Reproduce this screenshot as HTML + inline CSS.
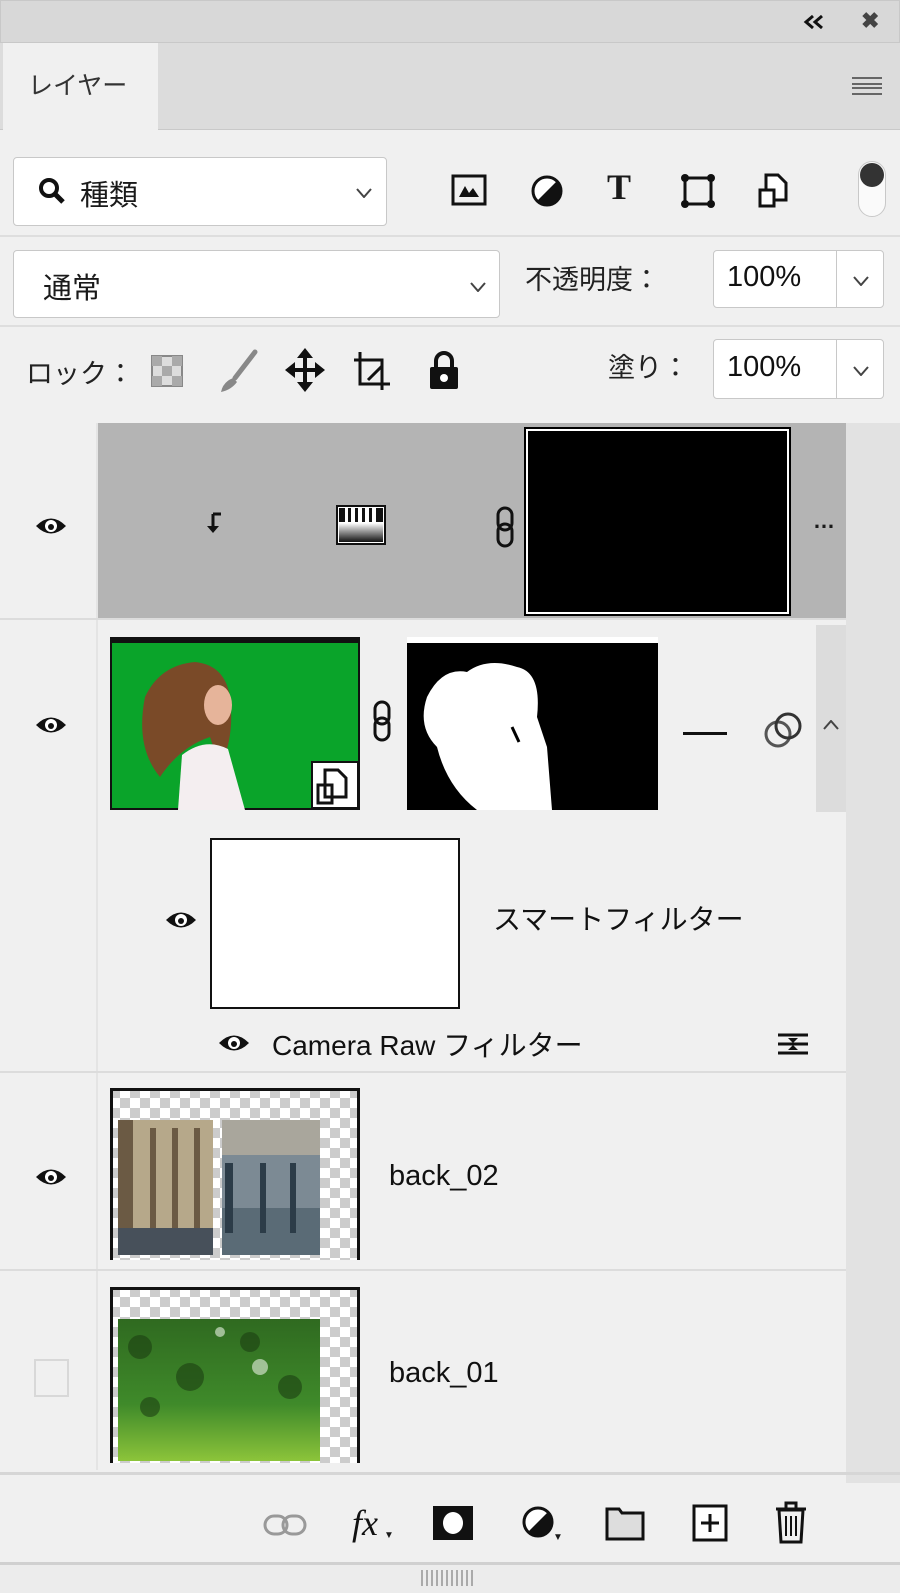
<!DOCTYPE html>
<html><head><meta charset="utf-8"><style>
*{margin:0;padding:0;box-sizing:border-box}
body{width:900px;height:1593px;background:#f0f0f0;position:relative;overflow:hidden;font-family:"Liberation Sans","Noto Sans CJK JP",sans-serif;color:#1a1a1a}
.a{position:absolute}
.box{position:absolute;background:#fff;border:1px solid #c8c8c8;border-radius:4px}
.t{position:absolute;white-space:nowrap}
.eye{position:absolute;width:34px;height:22px}
.chev{position:absolute;width:16px;height:10px}
</style></head><body>
<!-- top bar -->
<div class="a" style="left:0;top:0;width:900px;height:43px;background:#d8d8d8;border:1px solid #c8c8c8"></div>
<svg class="a" style="left:803px;top:14px" width="22" height="16"><path d="M10 2 L3 8 L10 14 M19 2 L12 8 L19 14" fill="none" stroke="#111" stroke-width="3"/></svg>
<div class="t" style="left:861px;top:8px;font-size:22px;font-weight:bold;color:#444">✖</div>
<!-- tab row -->
<div class="a" style="left:0;top:43px;width:900px;height:87px;background:#dcdcdc;border-bottom:1px solid #c9c9c9"></div>
<div class="a" style="left:3px;top:43px;width:155px;height:88px;background:#f0f0f0"></div>
<div class="t" style="left:28px;top:66px;font-size:25px;color:#333">レイヤー</div>
<div class="a" style="left:852px;top:77px;width:30px;height:18px;border-top:2px solid #666;border-bottom:2px solid #666"></div>
<div class="a" style="left:852px;top:83px;width:30px;height:6px;border-top:2px solid #666;border-bottom:2px solid #666"></div>
<!-- filter row -->
<div class="box" style="left:13px;top:157px;width:374px;height:69px"></div>
<svg class="a" style="left:38px;top:177px" width="28" height="28"><circle cx="11" cy="11" r="8" fill="none" stroke="#111" stroke-width="4"/><line x1="17" y1="17" x2="25" y2="25" stroke="#111" stroke-width="5"/></svg>
<div class="t" style="left:80px;top:172px;font-size:29px">種類</div>
<svg class="chev" style="left:356px;top:188px"><path d="M1 1 L8 9 L15 1" fill="none" stroke="#444" stroke-width="2"/></svg>
<svg class="a" style="left:451px;top:173px" width="36" height="34"><rect x="2" y="3" width="32" height="28" fill="none" stroke="#111" stroke-width="3"/><path d="M8 24 L14 13 L18 20 L22 15 L28 24Z" fill="#111"/></svg>
<svg class="a" style="left:531px;top:174px" width="32" height="34"><circle cx="16" cy="17" r="14" fill="#fff" stroke="#111" stroke-width="3"/><path d="M26 7 A14 14 0 0 1 6 27 Z" fill="#111"/></svg>
<div class="t" style="left:607px;top:166px;font-size:36px;font-weight:bold;font-family:'Liberation Serif',serif">T</div>
<svg class="a" style="left:680px;top:173px" width="36" height="36"><rect x="5" y="5" width="26" height="26" fill="none" stroke="#111" stroke-width="3"/><g fill="#111"><circle cx="5" cy="5" r="4"/><circle cx="31" cy="5" r="4"/><circle cx="5" cy="31" r="4"/><circle cx="31" cy="31" r="4"/></g></svg>
<svg class="a" style="left:757px;top:172px" width="32" height="38"><path d="M9 3 H21 L29 11 V28 H9Z" fill="#fff" stroke="#111" stroke-width="3"/><rect x="3" y="18" width="14" height="16" fill="#fff" stroke="#111" stroke-width="3"/></svg>
<div class="a" style="left:858px;top:161px;width:28px;height:56px;border:1px solid #c8c8c8;border-radius:14px;background:#fafafa"></div>
<div class="a" style="left:860px;top:163px;width:24px;height:24px;border-radius:12px;background:#333"></div>
<div class="a" style="left:0;top:235px;width:900px;height:2px;background:#dedede"></div>
<!-- blend row -->
<div class="box" style="left:13px;top:250px;width:487px;height:68px"></div>
<div class="t" style="left:43px;top:265px;font-size:29px">通常</div>
<svg class="chev" style="left:470px;top:282px"><path d="M1 1 L8 9 L15 1" fill="none" stroke="#444" stroke-width="2"/></svg>
<div class="t" style="left:525px;top:258px;font-size:27px;color:#222">不透明度：</div>
<div class="box" style="left:713px;top:250px;width:171px;height:58px"></div>
<div class="a" style="left:836px;top:251px;width:1px;height:56px;background:#c8c8c8"></div>
<div class="t" style="left:727px;top:261px;font-size:29px;color:#111">100%</div>
<svg class="chev" style="left:853px;top:276px"><path d="M1 1 L8 9 L15 1" fill="none" stroke="#444" stroke-width="2"/></svg>
<div class="a" style="left:0;top:325px;width:900px;height:2px;background:#dedede"></div>
<!-- lock row -->
<div class="t" style="left:26px;top:352px;font-size:27px;color:#222">ロック：</div>
<svg class="a" style="left:150px;top:354px" width="34" height="34"><rect x="2" y="2" width="30" height="30" fill="#ddd" stroke="#888" stroke-width="2"/><g fill="#aaa"><rect x="2" y="2" width="10" height="10"/><rect x="22" y="2" width="10" height="10"/><rect x="12" y="12" width="10" height="10"/><rect x="2" y="22" width="10" height="10"/><rect x="22" y="22" width="10" height="10"/></g></svg>
<svg class="a" style="left:215px;top:348px" width="46" height="46"><path d="M40 4 L20 30" stroke="#888" stroke-width="5" stroke-linecap="round"/><path d="M18 30 Q8 34 6 44 Q16 42 22 34Z" fill="#888"/></svg>
<svg class="a" style="left:285px;top:348px" width="40" height="44"><path d="M20 3 V41 M3 22 H37" stroke="#111" stroke-width="4"/><path d="M20 0 L12 10 H28Z M20 44 L12 34 H28Z M0 22 L10 14 V30Z M40 22 L30 14 V30Z" fill="#111"/></svg>
<svg class="a" style="left:352px;top:350px" width="40" height="42"><path d="M8 2 V34 H38 M2 10 H30 V40" fill="none" stroke="#111" stroke-width="3"/><path d="M16 30 L30 16" stroke="#111" stroke-width="3"/></svg>
<svg class="a" style="left:427px;top:350px" width="34" height="40"><path d="M9 18 V11 A8 8 0 0 1 25 11 V18" fill="none" stroke="#111" stroke-width="4"/><rect x="3" y="17" width="28" height="22" rx="2" fill="#111"/><circle cx="17" cy="28" r="4" fill="#fff"/></svg>
<div class="t" style="left:608px;top:346px;font-size:27px;color:#222">塗り：</div>
<div class="box" style="left:713px;top:339px;width:171px;height:60px"></div>
<div class="a" style="left:836px;top:340px;width:1px;height:58px;background:#c8c8c8"></div>
<div class="t" style="left:727px;top:351px;font-size:29px;color:#111">100%</div>
<svg class="chev" style="left:853px;top:366px"><path d="M1 1 L8 9 L15 1" fill="none" stroke="#444" stroke-width="2"/></svg>
<!-- layers area -->
<div class="a" style="left:846px;top:423px;width:54px;height:1060px;background:#e2e2e2"></div>
<div class="a" style="left:96px;top:423px;width:2px;height:1047px;background:#e4e4e4"></div>
<!-- layer 1 -->
<div class="a" style="left:98px;top:423px;width:748px;height:195px;background:#b4b4b4"></div>
<svg class="eye" style="left:34px;top:515px" viewBox="0 0 34 22"><path d="M2 11 Q17 -4 32 11 Q17 26 2 11Z" fill="#111"/><ellipse cx="17" cy="11" rx="6" ry="6" fill="#fff"/><circle cx="17" cy="12" r="3" fill="#111"/></svg>
<svg class="a" style="left:205px;top:510px" width="20" height="24"><path d="M8 4 H16 M8 4 V18" stroke="#111" stroke-width="3" fill="none"/><path d="M2 16 L8 23 L14 16Z" fill="#111"/></svg>
<svg class="a" style="left:336px;top:505px" width="50" height="40"><rect x="1" y="1" width="48" height="38" fill="#fff" stroke="#111" stroke-width="2"/><defs><linearGradient id="g" x1="0" x2="0" y1="0" y2="1"><stop offset="0" stop-color="#fff"/><stop offset="1" stop-color="#111"/></linearGradient></defs><rect x="3" y="18" width="44" height="19" fill="url(#g)"/><g fill="#111"><rect x="3" y="3" width="6" height="14"/><rect x="12" y="3" width="3" height="14"/><rect x="19" y="3" width="3" height="14"/><rect x="26" y="3" width="3" height="14"/><rect x="33" y="3" width="3" height="14"/><rect x="40" y="3" width="7" height="14"/></g></svg>
<svg class="a" style="left:495px;top:506px" width="20" height="42"><rect x="3" y="2" width="14" height="22" rx="7" fill="none" stroke="#111" stroke-width="3"/><rect x="3" y="18" width="14" height="22" rx="7" fill="none" stroke="#111" stroke-width="3"/></svg>
<div class="a" style="left:526px;top:429px;width:263px;height:185px;background:#000;border:2px solid #fff;outline:2px solid #000"></div>
<div class="t" style="left:813px;top:508px;font-size:22px;font-weight:bold;letter-spacing:-1px">…</div>
<div class="a" style="left:0;top:618px;width:846px;height:2px;background:#dcdcdc"></div>
<!-- layer 2 -->
<svg class="eye" style="left:34px;top:714px" viewBox="0 0 34 22"><path d="M2 11 Q17 -4 32 11 Q17 26 2 11Z" fill="#111"/><ellipse cx="17" cy="11" rx="6" ry="6" fill="#fff"/><circle cx="17" cy="12" r="3" fill="#111"/></svg>
<svg class="a" style="left:110px;top:637px" width="250" height="173"><rect x="0" y="0" width="250" height="173" fill="#111"/><rect x="2" y="6" width="246" height="165" fill="#0aa42a"/><path d="M35 60 Q50 28 85 25 Q115 28 120 60 Q125 100 110 130 L100 100 Q70 110 50 140 Q25 110 35 60Z" fill="#7a4a28"/><ellipse cx="108" cy="68" rx="14" ry="20" fill="#e6b49a"/><path d="M72 118 Q95 100 118 112 L135 173 H68Z" fill="#f4eef0"/><rect x="202" y="125" width="46" height="46" fill="#fff" stroke="#111" stroke-width="2"/><path d="M215 133 H228 L236 141 V160 H215Z M208 148 H222 V166 H208Z" fill="#fff" stroke="#111" stroke-width="3"/></svg>
<svg class="a" style="left:372px;top:700px" width="20" height="42"><rect x="3" y="2" width="14" height="22" rx="7" fill="none" stroke="#111" stroke-width="3"/><rect x="3" y="18" width="14" height="22" rx="7" fill="none" stroke="#111" stroke-width="3"/></svg>
<svg class="a" style="left:407px;top:637px" width="251" height="173"><rect width="251" height="173" fill="#000"/><rect y="0" width="251" height="6" fill="#fff"/><path d="M20 60 Q35 30 60 35 Q80 20 110 30 Q135 35 130 80 L140 110 L145 173 H70 Q40 150 30 110 Q10 90 20 60Z" fill="#fff"/><path d="M105 90 L112 105" stroke="#000" stroke-width="3"/></svg>
<div class="a" style="left:683px;top:732px;width:44px;height:3px;background:#111"></div>
<svg class="a" style="left:764px;top:710px" width="40" height="40"><circle cx="14" cy="24" r="12" fill="none" stroke="#555" stroke-width="3"/><circle cx="24" cy="16" r="12" fill="none" stroke="#333" stroke-width="3"/></svg>
<div class="a" style="left:816px;top:625px;width:30px;height:187px;background:#dcdcdc"></div>
<svg class="a" style="left:823px;top:720px" width="16" height="10"><path d="M1 9 L8 1 L15 9" fill="none" stroke="#444" stroke-width="2"/></svg>
<div class="a" style="left:210px;top:838px;width:250px;height:171px;background:#fff;border:2px solid #111"></div>
<svg class="eye" style="left:164px;top:909px" viewBox="0 0 34 22"><path d="M2 11 Q17 -4 32 11 Q17 26 2 11Z" fill="#111"/><ellipse cx="17" cy="11" rx="6" ry="6" fill="#fff"/><circle cx="17" cy="12" r="3" fill="#111"/></svg>
<div class="t" style="left:493px;top:898px;font-size:28px;color:#111">スマートフィルター</div>
<svg class="eye" style="left:217px;top:1032px" viewBox="0 0 34 22"><path d="M2 11 Q17 -4 32 11 Q17 26 2 11Z" fill="#111"/><ellipse cx="17" cy="11" rx="6" ry="6" fill="#fff"/><circle cx="17" cy="12" r="3" fill="#111"/></svg>
<div class="t" style="left:272px;top:1024px;font-size:28px;color:#111">Camera Raw フィルター</div>
<svg class="a" style="left:776px;top:1030px" width="34" height="28"><path d="M2 5 H32 M2 14 H32 M2 23 H32" stroke="#111" stroke-width="3"/><path d="M12 8 L17 13 L22 8Z M12 20 L17 15 L22 20Z" fill="#111"/></svg>
<div class="a" style="left:0;top:1071px;width:846px;height:2px;background:#dcdcdc"></div>
<!-- back_02 -->
<svg class="eye" style="left:34px;top:1166px" viewBox="0 0 34 22"><path d="M2 11 Q17 -4 32 11 Q17 26 2 11Z" fill="#111"/><ellipse cx="17" cy="11" rx="6" ry="6" fill="#fff"/><circle cx="17" cy="12" r="3" fill="#111"/></svg>
<svg class="a" style="left:110px;top:1088px" width="250" height="172"><defs><pattern id="ck" width="20" height="20" patternUnits="userSpaceOnUse"><rect width="20" height="20" fill="#fff"/><rect width="10" height="10" fill="#ccc"/><rect x="10" y="10" width="10" height="10" fill="#ccc"/></pattern></defs><rect width="250" height="172" fill="url(#ck)"/><rect x="0" y="0" width="250" height="3" fill="#111"/><rect x="0" y="0" width="3" height="172" fill="#111"/><rect x="247" y="0" width="3" height="172" fill="#111"/><rect x="8" y="32" width="95" height="135" fill="#b6a88a"/><g fill="#6b5a44"><rect x="8" y="32" width="15" height="135"/><rect x="40" y="40" width="6" height="125"/><rect x="62" y="40" width="6" height="125"/><rect x="84" y="40" width="6" height="125"/></g><rect x="8" y="140" width="95" height="27" fill="#47505a"/><rect x="112" y="32" width="98" height="135" fill="#7c8a94"/><rect x="112" y="32" width="98" height="35" fill="#a9a69c"/><rect x="112" y="120" width="98" height="47" fill="#5a6b76"/><g fill="#2c3c48"><rect x="115" y="75" width="8" height="70"/><rect x="150" y="75" width="6" height="70"/><rect x="180" y="75" width="6" height="70"/></g></svg>
<div class="t" style="left:389px;top:1160px;font-size:29px;color:#111">back_02</div>
<div class="a" style="left:0;top:1269px;width:846px;height:2px;background:#dcdcdc"></div>
<!-- back_01 -->
<div class="a" style="left:34px;top:1359px;width:35px;height:38px;border:2px solid #d8d8d8"></div>
<svg class="a" style="left:110px;top:1287px" width="250" height="176"><rect width="250" height="176" fill="url(#ck)"/><rect x="0" y="0" width="250" height="3" fill="#111"/><rect x="0" y="0" width="3" height="176" fill="#111"/><rect x="247" y="0" width="3" height="176" fill="#111"/><defs><linearGradient id="gr" x1="0" x2="0" y1="0" y2="1"><stop offset="0" stop-color="#2f6a20"/><stop offset="0.6" stop-color="#3f8a2a"/><stop offset="1" stop-color="#8cc43a"/></linearGradient></defs><rect x="8" y="32" width="202" height="142" fill="url(#gr)"/><g fill="#1c3f12" opacity=".6"><circle cx="30" cy="60" r="12"/><circle cx="80" cy="90" r="14"/><circle cx="140" cy="55" r="10"/><circle cx="40" cy="120" r="10"/><circle cx="180" cy="100" r="12"/></g><g fill="#cfe0c8" opacity=".7"><circle cx="150" cy="80" r="8"/><circle cx="110" cy="45" r="5"/></g></svg>
<div class="t" style="left:389px;top:1357px;font-size:29px;color:#111">back_01</div>
<!-- bottom toolbar -->
<div class="a" style="left:0;top:1472px;width:900px;height:3px;background:#d6d6d6"></div>
<svg class="a" style="left:263px;top:1512px" width="46" height="26"><rect x="2" y="4" width="22" height="18" rx="9" fill="none" stroke="#999" stroke-width="3"/><rect x="20" y="4" width="22" height="18" rx="9" fill="none" stroke="#999" stroke-width="3"/></svg>
<div class="t" style="left:352px;top:1502px;font-size:36px;font-style:italic;font-family:'Liberation Serif',serif;color:#111">fx</div>
<div class="t" style="left:384px;top:1530px;font-size:10px">▼</div>
<svg class="a" style="left:432px;top:1505px" width="42" height="36"><rect x="1" y="1" width="40" height="34" fill="#111"/><ellipse cx="21" cy="18" rx="10" ry="11" fill="#fff"/></svg>
<svg class="a" style="left:522px;top:1505px" width="34" height="36"><circle cx="16" cy="17" r="14" fill="#fff" stroke="#111" stroke-width="3"/><path d="M26 7 A14 14 0 0 1 6 27 Z" fill="#111"/></svg>
<div class="t" style="left:553px;top:1532px;font-size:10px">▼</div>
<svg class="a" style="left:605px;top:1505px" width="40" height="36"><path d="M2 4 H14 L17 8 H38 V34 H2Z" fill="#ddd" stroke="#111" stroke-width="3"/></svg>
<svg class="a" style="left:692px;top:1504px" width="36" height="38"><rect x="2" y="2" width="32" height="34" fill="#fff" stroke="#111" stroke-width="3"/><path d="M18 10 V28 M9 19 H27" stroke="#111" stroke-width="3"/></svg>
<svg class="a" style="left:774px;top:1500px" width="34" height="44"><path d="M2 9 H32 M12 9 V3 H22 V9" fill="none" stroke="#111" stroke-width="3"/><path d="M5 10 H29 L27 42 H7Z" fill="none" stroke="#111" stroke-width="3"/><path d="M12 16 V36 M17 16 V36 M22 16 V36" stroke="#111" stroke-width="2"/></svg>
<div class="a" style="left:0;top:1562px;width:900px;height:3px;background:#d0d0d0"></div>
<div class="a" style="left:0;top:1565px;width:900px;height:28px;background:#ececec"></div>
<div class="a" style="left:421px;top:1570px;width:55px;height:16px;background:repeating-linear-gradient(90deg,#aaa 0 2px,transparent 2px 5px)"></div>
</body></html>
